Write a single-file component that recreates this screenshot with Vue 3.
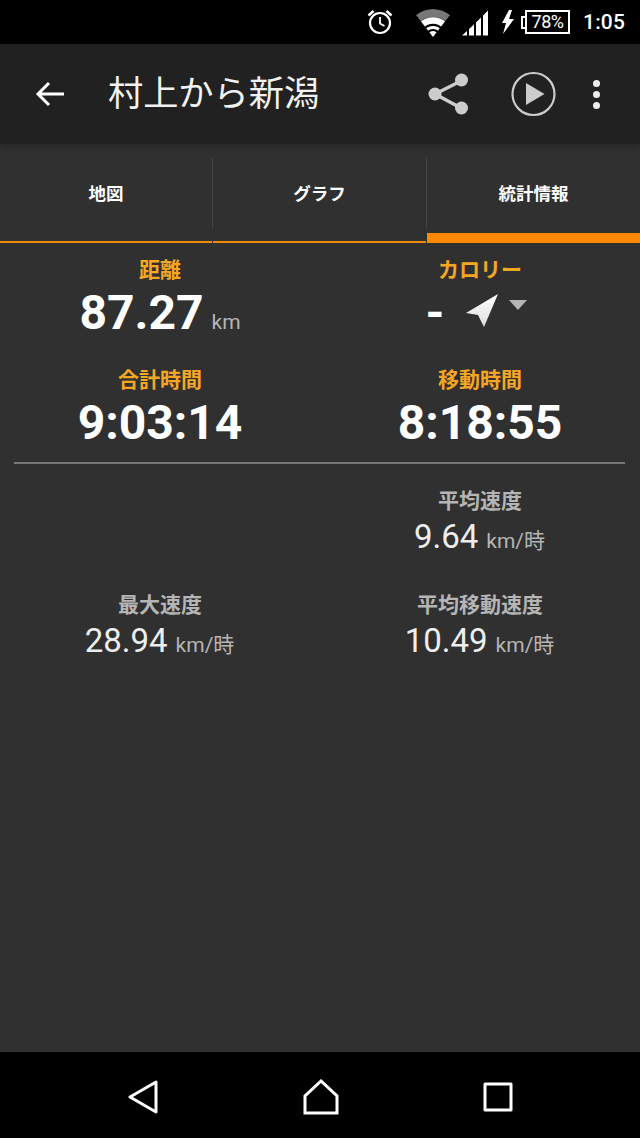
<script setup>
const tabs = [
	{ label: '地図', active: false },
	{ label: 'グラフ', active: false },
	{ label: '統計情報', active: true },
]

const speeds = [
	{ label: '', value: '', unit: '' },
	{ label: '平均速度', value: '9.64', unit: 'km/時' },
	{ label: '最大速度', value: '28.94', unit: 'km/時' },
	{ label: '平均移動速度', value: '10.49', unit: 'km/時' },
]
</script>

<template>
	<div class="screen">
		<div class="status">
			<svg class="alarm" width="28" height="28" viewBox="0 0 28 28" fill="none" stroke="#fff">
				<circle cx="14" cy="15" r="10" stroke-width="2.2" />
				<path d="M14 9v6.5l4.5 2.5" stroke-width="1.8" />
				<path d="M2.5 7.5l5-4.5M25.5 7.5l-5-4.5" stroke-width="2.6" />
			</svg>
			<svg class="wifi" width="34" height="28" viewBox="0 0 34 28">
				<clipPath id="wifi-wedge">
					<path d="M0 6C10-2 24-2 34 6L17 28Z" />
				</clipPath>
				<g clip-path="url(#wifi-wedge)" fill="none">
					<circle cx="17" cy="28" r="24" stroke="#777" stroke-width="8" />
					<circle cx="17" cy="28" r="16.500" stroke="#fff" stroke-width="6.500" />
					<circle cx="17" cy="28" r="9.500" stroke="#fff" stroke-width="3" />
					<circle cx="17" cy="28" r="6" fill="#fff" />
				</g>
			</svg>
			<svg class="signal" width="28" height="28" viewBox="0 0 28 28" fill="#fff">
				<path d="M1 26.500L6 22v4.500ZM8 20l5-4.500v11H8ZM15 13.500l5-5v18h-5ZM22 6.500l5-5v25h-5Z" />
			</svg>
			<svg class="bolt" width="14" height="24" viewBox="0 0 14 24" fill="#fff">
				<path d="M8 0L1 13h4L2 24 13 9H8l3-9Z" />
			</svg>
			<div class="battery">
				<span class="nub"></span>
				<span class="cell">78%</span>
			</div>
			<span class="clock">1:05</span>
		</div>

		<header class="appbar">
			<svg class="back" width="30" height="30" viewBox="0 0 30 30" fill="none" stroke="#fff" stroke-width="3">
				<path d="M29 15H3M14 4L3 15l11 11" />
			</svg>
			<h1>村上から新潟</h1>
			<svg class="share" width="42" height="42" viewBox="0 0 42 42">
				<path d="M33 8L7 21l26 14" fill="none" stroke="#ccc" stroke-width="3.500" />
				<circle cx="33.500" cy="7" r="6.500" fill="#ccc" />
				<circle cx="7" cy="21" r="6.500" fill="#ccc" />
				<circle cx="33.500" cy="35" r="6.500" fill="#ccc" />
			</svg>
			<svg class="play" width="46" height="46" viewBox="0 0 46 46">
				<circle cx="22.500" cy="23" r="21" fill="none" stroke="#ccc" stroke-width="2.200" />
				<path d="M15 12L33.500 23 15 34Z" fill="#ccc" />
			</svg>
			<div class="more">
				<span></span>
				<span></span>
				<span></span>
			</div>
		</header>

		<nav class="tabs">
			<div v-for="tab in tabs" :key="tab.label" class="tab" :class="{ active: tab.active }">
				<span>{{ tab.label }}</span>
			</div>
		</nav>

		<main class="stats">
			<section class="main-grid">
				<div class="stat">
					<div class="label">距離</div>
					<div class="value"><b>87.27</b><small>km</small></div>
				</div>
				<div class="stat">
					<div class="label">カロリー</div>
					<div class="value calories">
						<b>-</b>
						<svg class="arrow" width="32" height="34" viewBox="0 0 32 34">
							<defs>
								<linearGradient id="arrow-fill" x1="0" y1="0" x2="0" y2="1">
									<stop offset="0" stop-color="#fff" />
									<stop offset="1" stop-color="#ddd" />
								</linearGradient>
							</defs>
							<path d="M0 19L32 0 18 33 12 21Z" fill="url(#arrow-fill)" />
						</svg>
						<svg class="caret" width="18" height="10" viewBox="0 0 18 10">
							<path d="M0 0h18L9 10Z" fill="#b5b5b5" />
						</svg>
					</div>
				</div>
				<div class="stat">
					<div class="label">合計時間</div>
					<div class="value"><b>9:03:14</b></div>
				</div>
				<div class="stat">
					<div class="label">移動時間</div>
					<div class="value"><b>8:18:55</b></div>
				</div>
			</section>

			<hr />

			<section class="speed-grid">
				<div v-for="(item, index) in speeds" :key="index" class="speed">
					<template v-if="item.label">
						<div class="speed-label">{{ item.label }}</div>
						<div class="speed-value">{{ item.value }}<small>{{ item.unit }}</small></div>
					</template>
				</div>
			</section>
		</main>

		<footer class="navbar">
			<svg width="32" height="34" viewBox="0 0 32 34" fill="none" stroke="#fff" stroke-width="3" stroke-linejoin="round">
				<path d="M29 2L3 17l26 15Z" />
			</svg>
			<svg width="36" height="36" viewBox="0 0 36 36" fill="none" stroke="#fff" stroke-width="3">
				<path d="M18 2L2 17v17h32V17Z" />
			</svg>
			<svg width="30" height="30" viewBox="0 0 30 30" fill="none" stroke="#fff" stroke-width="3" stroke-linejoin="round">
				<path d="M2 2h26v26H2Z" />
			</svg>
		</footer>
	</div>
</template>

<style>
html, body
{
	margin: 0;
	background: #000;
}
</style>

<style scoped>
.screen
{
	width: 640px;
	height: 1138px;
	display: flex;
	flex-direction: column;
	overflow: hidden;
	background: #303030;
	font-family: Roboto, "Noto Sans CJK JP", sans-serif;
	color: #fff;
}

.status
{
	height: 44px;
	flex: none;
	display: flex;
	align-items: center;
	background: #000;
	padding-left: 366px;
	box-sizing: border-box;
}
.alarm { flex: none; margin-right: 22px; }
.wifi { flex: none; margin-right: 11px; margin-top: 1px; }
.signal { flex: none; margin-right: 12px; margin-top: 1px; }
.bolt { flex: none; margin-right: 6px; }
.battery
{
	display: flex;
	align-items: center;
	margin-right: 13px;
}
.nub
{
	width: 4px;
	height: 13px;
	border: 2px solid #fff;
	border-right: 0;
	box-sizing: border-box;
}
.cell
{
	width: 45px;
	height: 24px;
	box-sizing: border-box;
	border: 2px solid #fff;
	font-size: 18px;
	line-height: 20px;
	text-align: center;
	letter-spacing: -0.5px;
}
.clock
{
	font-size: 21px;
	font-weight: 500;
	letter-spacing: 0.2px;
}

.appbar
{
	height: 100px;
	flex: none;
	display: flex;
	align-items: center;
	background: #212121;
	box-sizing: border-box;
	padding-left: 35px;
	position: relative;
	z-index: 1;
	box-shadow: 0 2px 8px rgba(0, 0, 0, 0.25);
}
.back { flex: none; margin-right: 43px; }
h1
{
	margin: 1px 0 0;
	width: 320px;
	flex: none;
	font-size: 35.2px;
	font-weight: 400;
	line-height: 1;
	color: #f2f2f2;
}
.share { flex: none; margin-right: 41px; }
.play { flex: none; margin-right: 36px; }
.more
{
	display: flex;
	flex-direction: column;
	gap: 4px;
}
.more span
{
	width: 7px;
	height: 7px;
	border-radius: 50%;
	background: #eee;
}

.tabs
{
	height: 99px;
	flex: none;
	display: grid;
	grid-template-columns: 212px 213px 1fr;
	column-gap: 1px;
}
.tab
{
	display: flex;
	align-items: center;
	justify-content: center;
	height: 99px;
	box-sizing: border-box;
	border-bottom: 2px solid #f08a00;
	font-size: 17.5px;
	font-weight: 700;
	position: relative;
}
.tab:not(:first-child)::before
{
	content: "";
	position: absolute;
	left: -1px;
	top: 14px;
	height: 71px;
	width: 1px;
	background: #444;
}
.tab.active
{
	border-bottom: 10px solid #ff8a00;
	padding-top: 8px;
}

.stats
{
	flex: 1;
	min-height: 0;
}
.main-grid
{
	display: grid;
	grid-template-columns: 1fr 1fr;
	grid-auto-rows: 110px;
	padding-top: 14px;
}
.stat { text-align: center; }
.label
{
	font-size: 21px;
	font-weight: 700;
	line-height: 26px;
	color: #f5a623;
}
.value
{
	height: 60px;
	line-height: 60px;
	white-space: nowrap;
}
.value b
{
	font-size: 48px;
	font-weight: 700;
}
.value small
{
	font-size: 21px;
	color: #b5b5b5;
	margin-left: 8px;
}
.calories
{
	display: flex;
	align-items: center;
	justify-content: center;
	padding-right: 7px;
}
.arrow { margin-left: 22px; margin-bottom: 4px; }
.caret { margin-left: 11px; margin-bottom: 16px; }

hr
{
	margin: -15px 15px 0 14px;
	border: 0;
	height: 2px;
	background: #777;
}

.speed-grid
{
	display: grid;
	grid-template-columns: 1fr 1fr;
	grid-auto-rows: 104px;
	padding-top: 24px;
}
.speed { text-align: center; }
.speed-label
{
	font-size: 21px;
	font-weight: 700;
	line-height: 26px;
	color: #b5b5b5;
}
.speed-value
{
	font-size: 33px;
	line-height: 46px;
	color: #eee;
	white-space: nowrap;
	padding-right: 1px;
}
.speed-value small
{
	font-size: 21px;
	color: #b5b5b5;
	margin-left: 8px;
}

.navbar
{
	height: 86px;
	flex: none;
	display: flex;
	align-items: center;
	justify-content: space-between;
	background: #000;
	box-sizing: border-box;
	padding: 3px 127px 0;
}
</style>
